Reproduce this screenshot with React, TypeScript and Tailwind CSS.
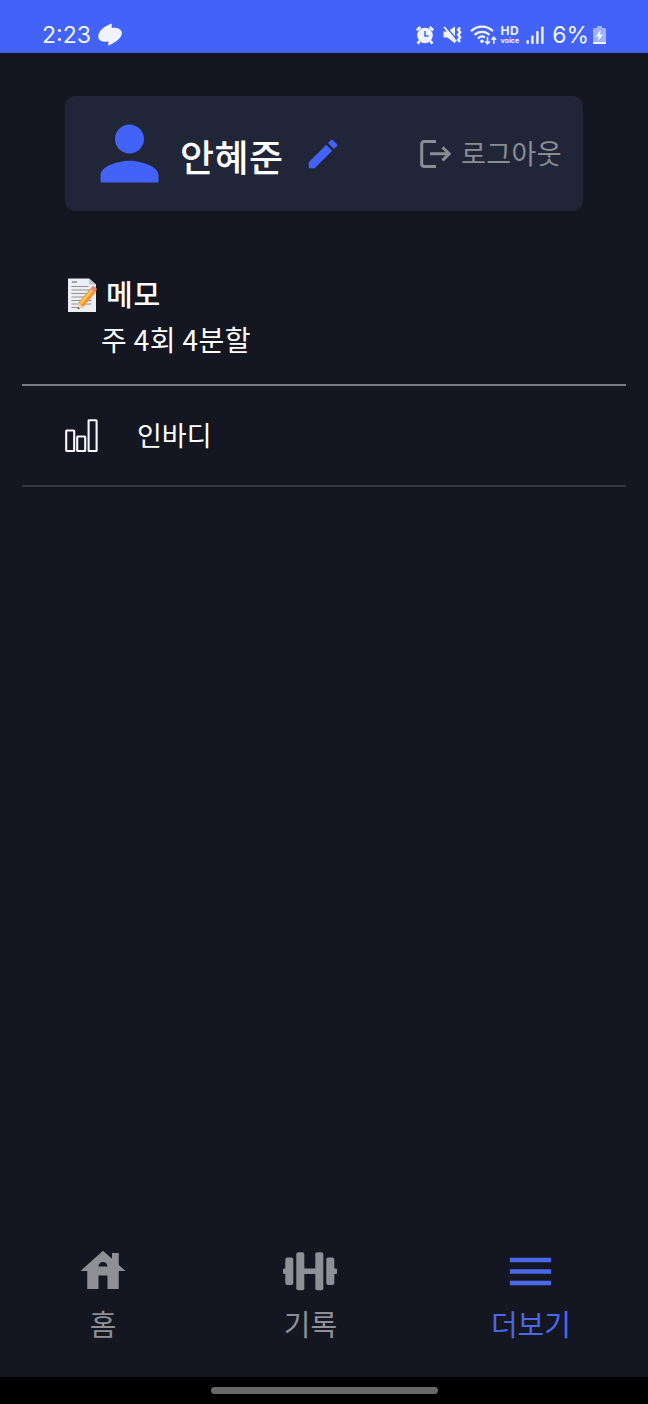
import type { ReactNode } from 'react';
import { MdEdit, MdHouse, MdMenu, MdPerson } from 'react-icons/md';

const AlarmIcon = () => (
  <svg width="20" height="20" viewBox="0 0 20 20" fill="none">
    <circle cx="10" cy="10.5" r="7.8" fill="#f1f4ff" />
    <path d="M1.8 5.2 5.4 2M18.2 5.2 14.6 2M4.6 16 2.6 18.6M15.4 16l2 2.6" stroke="#f1f4ff" strokeWidth="2.8" />
    <path d="M10 6v5h3.6" stroke="#4262f8" strokeWidth="1.5" />
  </svg>
);

const MuteIcon = () => (
  <svg width="19" height="20" viewBox="0 0 19 20" fill="none">
    <path d="M0.5 6.5h4l7.5-5v17l-7.5-6h-4z" fill="#f1f4ff" />
    <path d="m2.5 1 12 14.5" stroke="#4262f8" strokeWidth="1.4" />
    <path d="m1.2 2 12 14.5" stroke="#f1f4ff" strokeWidth="1.8" />
    <path d="m17 2.5-1.8 2.2 2 2.5-2 2.500 2 2.500-2 2.500 1.800 2.300" stroke="#f1f4ff" strokeWidth="2.4" />
  </svg>
);

const WifiIcon = () => (
  <svg width="27" height="22" viewBox="0 0 27 22" fill="none" stroke="#f1f4ff" strokeWidth="2.2">
    <path d="M1 7.2a15.5 15.5 0 0 1 22 0M4.5 10.9a10.6 10.6 0 0 1 15 0M8 14.4a5.7 5.7 0 0 1 7-1" />
    <circle cx="12" cy="17.3" r="1.8" fill="#f1f4ff" stroke="none" />
    <path d="M17.5 13v6.5m-2.3-2.3 2.3 2.6 2.3-2.6M23.8 20v-6.5m-2.3 2.3 2.3-2.6 2.3 2.6" strokeWidth="1.6" />
  </svg>
);

const SignalIcon = () => (
  <svg width="18" height="18" viewBox="0 0 18 18" fill="#f1f4ff">
    <rect x="0.5" y="14" width="2.4" height="4" rx="1" />
    <rect x="5.2" y="9.5" width="2.4" height="8.5" rx="1" />
    <rect x="10.2" y="5" width="2.4" height="13" rx="1" />
    <rect x="15.2" y="0.5" width="2.4" height="17.5" rx="1" />
  </svg>
);

const BatteryIcon = () => (
  <svg width="13" height="20" viewBox="0 0 13 20">
    <path d="M4 1h5v2h2.5a1.5 1.5 0 0 1 1.5 1.5V19H0V4.5A1.5 1.5 0 0 1 1.500 3H4z" fill="#a1b1fb" />
    <path d="M0 17h13v1a1 1 0 0 1-1 1H1a1 1 0 0 1-1-1z" fill="#f1f4ff" />
    <path d="M7.6 5 2.7 11.5h3L5 16l5-6.500H7z" fill="#f1f4ff" />
  </svg>
);

const ChatIcon = () => (
  <svg width="26" height="24" viewBox="0 0 26 24" fill="#f1f4ff">
    <path d="M14.800 0.600 14.600 5C20.500 4.200 25 6.500 24.800 10.200 24.500 15.500 18 19.500 11.200 22.800L11.400 18.600C5.500 19.300 1 17.500 1.200 13.500 1.500 7.500 8 3 14.800 0.600z" />
  </svg>
);

const LogoutIcon = () => (
  <svg width="32" height="28" viewBox="0 0 32 28" fill="none" stroke="currentColor" strokeWidth="3">
    <path d="M16 1.6H4a2.3 2.3 0 0 0-2.3 2.3v20.2A2.3 2.3 0 0 0 4 26.4h12" />
    <path d="M10 13.8h19.5M22.5 7.2l6.7 6.6-6.7 6.6" />
  </svg>
);

const MemoIcon = () => (
  <svg width="30" height="35" viewBox="0 0 30 35">
    <path d="M1 0.5h21l7 6V34H1z" fill="#eceef3" />
    <path d="M22 0.5v6h7z" fill="#c3c6d0" />
    <path d="M5 4h5" stroke="#555a66" strokeWidth="1" />
    <path d="M4.5 8.5h17M4.5 12h20M4.5 15.5h20M4.5 19h20M4.5 22.5h20M4.5 26h20M4.5 29.5h8" stroke="#83868f" strokeWidth="0.9" />
    <path d="m11.5 24.5 11.7-13.7 5 4.2-11.8 14-5.700 2.300z" fill="#ee9a35" />
    <path d="m13.500 25.500 11.500-13.300" stroke="#ffc668" strokeWidth="2" />
    <path d="m23.200 10.800 2.300-2.600c1.700-.8 4.500 1.500 4.200 3.500L28.200 15z" fill="#e58a7a" />
    <path d="m11.500 24.500 4.900 4.500-5.700 2.300z" fill="#f2d2a4" />
    <path d="m11 29 1.800 1.500-2.100.8z" fill="#3b3b3b" />
  </svg>
);

const BarsIcon = () => (
  <svg width="33" height="34" viewBox="0 0 33 34" fill="none" stroke="#f8f8fa" strokeWidth="2.1">
    <rect x="1.2" y="11.5" width="8" height="20.5" rx="0.5" />
    <rect x="12.2" y="17.500" width="8" height="14.500" rx="0.5" />
    <rect x="23.6" y="1.2" width="8" height="30.8" rx="0.5" />
  </svg>
);

const DumbbellIcon = () => (
  <svg width="54" height="53" viewBox="0 0 54 53" fill="currentColor">
    <rect x="0" y="24.5" width="4" height="5.5" rx="1" />
    <rect x="2.3" y="13.5" width="8" height="27.5" rx="2" />
    <rect x="13.3" y="8.3" width="8" height="38" rx="2" />
    <rect x="21" y="24.5" width="12" height="5.5" />
    <rect x="32.3" y="8.3" width="8" height="38" rx="2" />
    <rect x="43.3" y="13.5" width="8" height="27.5" rx="2" />
    <rect x="50" y="24.5" width="4" height="5.5" rx="1" />
  </svg>
);

interface NavItem {
  label: string;
  icon: ReactNode;
  active?: boolean;
}

const navItems: NavItem[] = [
  { label: '홈', icon: <MdHouse size={54} /> },
  { label: '기록', icon: <DumbbellIcon /> },
  { label: '더보기', icon: <MdMenu size={55} />, active: true },
];

function StatusBar() {
  return (
    <header className="flex h-[53px] items-center justify-between bg-[#4262f8] px-[42px] pt-[17px] font-['Inter',sans-serif] text-[#f1f4ff]">
      <div className="flex items-center gap-[6px]">
        <span className="text-[23px] leading-none">2:23</span>
        <ChatIcon />
      </div>
      <div className="flex items-center">
        <AlarmIcon />
        <span className="ml-[8px]"><MuteIcon /></span>
        <span className="ml-[8px]"><WifiIcon /></span>
        <div className="ml-[4px] flex flex-col items-center font-bold">
          <span className="text-[12px] leading-[12px] tracking-[0.5px]">HD</span>
          <span className="text-[7px] leading-[8px]">voice</span>
        </div>
        <span className="ml-[7px]"><SignalIcon /></span>
        <span className="ml-[8px] text-[23px] leading-none">6%</span>
        <span className="ml-[4px]"><BatteryIcon /></span>
      </div>
    </header>
  );
}

export default function App() {
  return (
    <div className="flex h-[1404px] w-[648px] flex-col bg-[#141722] font-['Noto_Sans_CJK_KR',sans-serif] text-white">
      <StatusBar />

      <main className="flex-1 px-[22px] pt-[43px]">
        <section className="mx-[43px] flex h-[115px] items-center rounded-[10px] bg-[#202637] px-[21px]">
          <MdPerson size={87} className="text-[#4262f8]" />
          <h1 className="ml-[7px] pt-[6px] text-[37px] leading-none font-medium tracking-[0.5px]">안혜준</h1>
          <MdEdit size={38} className="ml-[20px] text-[#4262f8]" />
          <button className="ml-auto flex items-center gap-[9px] text-[#8b8d96]">
            <LogoutIcon />
            <span className="pb-[2px] text-[27px] leading-none tracking-[0.4px]">로그아웃</span>
          </button>
        </section>

        <section className="h-[175px] border-b-2 border-[#777a87] pt-[64px] pl-[45px]">
          <div className="flex h-[40px] items-center gap-[9px]">
            <MemoIcon />
            <h2 className="pb-[3px] text-[29px] leading-none font-medium tracking-[0.8px]">메모</h2>
          </div>
          <p className="mt-[4px] pl-[34px] text-[28px] leading-[40px] tracking-[0.4px]">주 4회 4분할</p>
        </section>

        <section className="flex h-[101px] items-center gap-[39px] border-b-2 border-[#343742] pl-[43px]">
          <BarsIcon />
          <span className="pb-[2px] text-[27px] leading-none">인바디</span>
        </section>
      </main>

      <nav className="flex h-[133px] justify-between pr-[77px] pl-[76px]">
        {navItems.map((item) => (
          <div
            key={item.label}
            className={`flex flex-col items-center ${item.active ? 'text-[#4a68e8]' : 'text-[#8e9096]'}`}
          >
            <div className="flex h-[55px] items-start">{item.icon}</div>
            <span className="mt-[9px] text-[29px] leading-[30px]">{item.label}</span>
          </div>
        ))}
      </nav>

      <footer className="flex h-[27px] justify-center bg-black pt-[10px]">
        <div className="h-[7px] w-[227px] rounded-full bg-[#686868]" />
      </footer>
    </div>
  );
}
